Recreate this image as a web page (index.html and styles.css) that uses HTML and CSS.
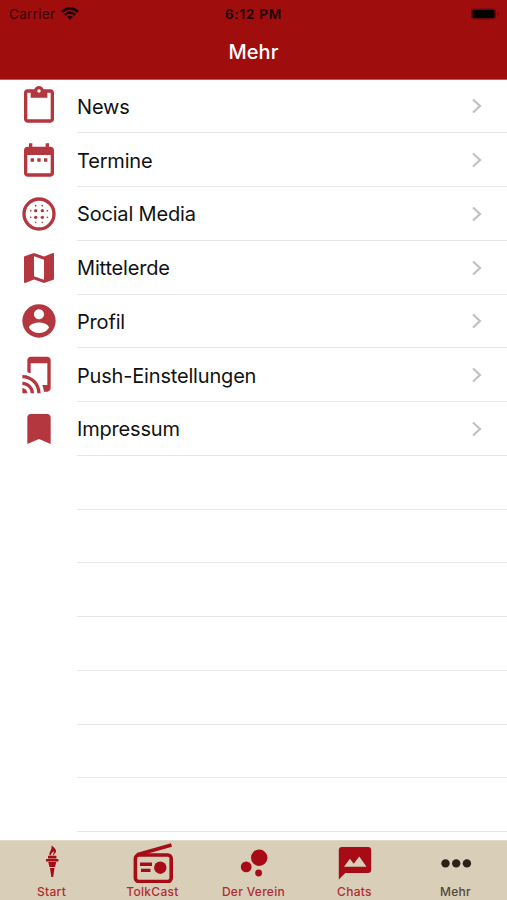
FILE: index.html
```html
<!DOCTYPE html>
<html lang="de">
<head>
<meta charset="utf-8">
<title>Mehr</title>
<link rel="stylesheet" href="styles.css">
</head>
<body>
<div class="app">
  <header class="header">
    <div class="status">
      <div class="carrier"><span>Carrier</span>
        <svg class="wifi" viewBox="0 0 18 13"><path d="M1 4.9Q9-2.2 17 4.900M3.800 7.800q5.200-4.500 10.400 0" fill="none" stroke="currentColor" stroke-width="2.500"/><path d="M9 12.700 6.100 9.800q2.900-2.300 5.800 0z"/></svg>
      </div>
      <span class="time">6:12 PM</span>
      <svg class="battery" viewBox="0 0 30 14"><rect x="1" y="1.500" width="25" height="11" rx="3.200" fill="#6c080a"/><rect x="2.500" y="3" width="22" height="8" rx="1.800"/><path d="M27.300 5v4q1.400-.6 1.400-2t-1.400-2" fill="#6c080a"/></svg>
    </div>
    <h1 class="title">Mehr</h1>
  </header>
  <main class="list">
    <a class="row"><svg class="icon" viewBox="0 0 24 24"><path d="M19 2h-4.180C14.400.84 13.300 0 12 0S9.600.84 9.180 2H5c-1.100 0-2 .9-2 2v16c0 1.100.9 2 2 2h14c1.100 0 2-.9 2-2V4c0-1.100-.9-2-2-2zm-7 0c.55 0 1 .45 1 1s-.45 1-1 1-1-.45-1-1 .45-1 1-1zm7 18H5V4h2v3h10V4h2v16z"/></svg><span class="cell"><span class="name">News</span><svg class="chevron" viewBox="0 0 12 16"><path d="m2 1.500 7 6.500-7 6.500"/></svg></span></a>
    <a class="row"><svg class="icon" viewBox="0 0 24 24"><path d="M9 11H7v2h2v-2zm4 0h-2v2h2v-2zm4 0h-2v2h2v-2zm2-7h-1V2h-2v2H8V2H6v2H5c-1.100 0-2 .9-2 2v14c0 1.100.9 2 2 2h14c1.100 0 2-.9 2-2V6c0-1.100-.9-2-2-2zm0 16H5V9h14v11z"/></svg><span class="cell"><span class="name">Termine</span><svg class="chevron" viewBox="0 0 12 16"><path d="m2 1.500 7 6.500-7 6.500"/></svg></span></a>
    <a class="row"><svg class="icon" viewBox="0 0 24 24"><circle cx="12" cy="12" r="9" fill="none" stroke="currentColor" stroke-width="2"/><g><circle cx="10" cy="10" r="1"/><circle cx="14" cy="10" r="1"/><circle cx="10" cy="14" r="1"/><circle cx="14" cy="14" r="1"/><circle cx="10" cy="7" r=".5"/><circle cx="14" cy="7" r=".5"/><circle cx="10" cy="17" r=".5"/><circle cx="14" cy="17" r=".5"/><circle cx="7" cy="10" r=".5"/><circle cx="7" cy="14" r=".5"/><circle cx="17" cy="10" r=".5"/><circle cx="17" cy="14" r=".5"/></g></svg><span class="cell"><span class="name">Social Media</span><svg class="chevron" viewBox="0 0 12 16"><path d="m2 1.500 7 6.500-7 6.500"/></svg></span></a>
    <a class="row"><svg class="icon" viewBox="0 0 24 24"><path d="M20.500 3l-.16.03L15 5.100 9 3 3.360 4.900c-.21.07-.36.25-.36.48V20.500c0 .28.22.5.5.5l.16-.03L9 18.900l6 2.100 5.640-1.900c.21-.07.36-.25.36-.48V3.500c0-.28-.22-.5-.5-.5zM15 19l-6-2.110V5l6 2.110V19z"/></svg><span class="cell"><span class="name">Mittelerde</span><svg class="chevron" viewBox="0 0 12 16"><path d="m2 1.500 7 6.500-7 6.500"/></svg></span></a>
    <a class="row"><svg class="icon" viewBox="0 0 24 24"><path d="M12 2C6.480 2 2 6.480 2 12s4.480 10 10 10 10-4.480 10-10S17.520 2 12 2zm0 3c1.660 0 3 1.340 3 3s-1.340 3-3 3-3-1.340-3-3 1.340-3 3-3zm0 14.200c-2.500 0-4.710-1.280-6-3.220.03-1.990 4-3.080 6-3.080 1.990 0 5.970 1.090 6 3.080-1.290 1.940-3.500 3.220-6 3.220z"/></svg><span class="cell"><span class="name">Profil</span><svg class="chevron" viewBox="0 0 12 16"><path d="m2 1.500 7 6.500-7 6.500"/></svg></span></a>
    <a class="row"><svg class="icon" viewBox="0 0 24 24"><path d="M2 16v2c2.760 0 5 2.240 5 5h2c0-3.870-3.130-7-7-7zm0 4v3h3c0-1.660-1.340-3-3-3zm0-8v2c4.970 0 9 4.030 9 9h2c0-6.080-4.930-11-11-11zM17 1H7c-1.100 0-2 .9-2 2v7.370c.69.16 1.360.37 2 .64V5h10v13h-3.030c.52 1.250.84 2.590.95 4H17c1.100 0 2-.9 2-2V3c0-1.100-.9-2-2-2z"/></svg><span class="cell"><span class="name">Push-Einstellungen</span><svg class="chevron" viewBox="0 0 12 16"><path d="m2 1.500 7 6.500-7 6.500"/></svg></span></a>
    <a class="row"><svg class="icon" viewBox="0 0 24 24"><path d="M17 3H7c-1.100 0-2 .9-2 2v16l7-3 7 3V5c0-1.100-.9-2-2-2z"/></svg><span class="cell"><span class="name">Impressum</span><svg class="chevron" viewBox="0 0 12 16"><path d="m2 1.500 7 6.500-7 6.500"/></svg></span></a>
    <div class="row"><span class="cell"></span></div>
    <div class="row"><span class="cell"></span></div>
    <div class="row"><span class="cell"></span></div>
    <div class="row"><span class="cell"></span></div>
    <div class="row"><span class="cell"></span></div>
    <div class="row"><span class="cell"></span></div>
    <div class="row"><span class="cell"></span></div>
  </main>
  <nav class="tabs">
    <a class="tab"><svg class="glyph" viewBox="0 0 42 42"><path d="M20.500 4.500c4.200 3 5 4.900 4.300 6.700-.5 1.200-1.700 1.900-2.300 3h-.9c.8-1.500 1.700-2.900.8-4.300-.4 1.800-2.800 2.300-2.200 4.300h-1.400c-1.600-3 2.500-4.500 1.700-9.700zM17 14.800h8.400v2.600H17zM15 18h12.400v2.400H15zM17.300 21h7.900l-1.100 5h-5.700zM19 27h4.500l-1.300 9h-1.900z"/></svg><span>Start</span></a>
    <a class="tab"><svg class="glyph" viewBox="0 0 42 42"><g fill="none" stroke="currentColor" stroke-width="3.600"><rect x="3.400" y="14" width="35.800" height="26.500" rx="3.400"/><path d="M5 13.800 39.500 3.900"/></g><path d="M8 21.600h12V25H8zM9 27.800h9.500v3.300H9z"/><circle cx="28.300" cy="26.700" r="6.200"/></svg><span>TolkCast</span></a>
    <a class="tab"><svg class="glyph" viewBox="0 0 42 42"><circle cx="26.200" cy="16.700" r="8.200"/><circle cx="13.200" cy="25.900" r="5.400"/><circle cx="25.600" cy="32" r="3.400"/></svg><span>Der Verein</span></a>
    <a class="tab"><svg class="glyph" viewBox="0 0 42 42"><path fill-rule="evenodd" d="M8 6h26a3.200 3.200 0 0 1 3.200 3.200v19.600A3.200 3.200 0 0 1 34 32H11.300l-6.500 6.500V9.200A3.200 3.200 0 0 1 8 6zM10 25.700h22.500L25.300 15.500l-5.600 7.200-3.800-5z"/></svg><span>Chats</span></a>
    <a class="tab active"><svg class="glyph" viewBox="0 0 42 42"><circle cx="10.500" cy="22.400" r="4.200"/><circle cx="21.200" cy="22.400" r="4.200"/><circle cx="31.900" cy="22.400" r="4.200"/></svg><span>Mehr</span></a>
  </nav>
</div>
</body>
</html>
```
FILE: styles.css
```css
* { box-sizing: border-box; }
body {
  margin: 0;
  background: #fff;
  font-family: Inter, "Liberation Sans", sans-serif;
}
.app {
  display: flex;
  flex-direction: column;
  height: 900px;
  overflow: hidden;
}
.header {
  flex: none;
  height: 79.5px;
  background: #9f0d0d;
  border-bottom: 1px solid #c85658;
}
.status {
  display: grid;
  grid-template-columns: 1fr auto 1fr;
  align-items: center;
  height: 27px;
  padding: 0 7px 0 9px;
  color: #180303;
  font-size: 13.5px;
}
.carrier { display: flex; align-items: center; gap: 6px; color: #350506; letter-spacing: 0.3px; }
.wifi { width: 18px; height: 13px; fill: currentColor; color: #180303; }
.time { margin-right: 2px; font-weight: 600; letter-spacing: 0.8px; }
.battery { width: 30px; height: 14px; justify-self: end; }
.title {
  margin: 0;
  color: #fff;
  font-size: 20px;
  font-weight: 500;
  line-height: 51px;
  letter-spacing: 0;
  text-align: center;
}
.list { flex: 1; min-height: 0; overflow: hidden; }
.row { display: flex; justify-content: flex-end; align-items: center; height: 53.75px; }
.icon { flex: none; width: 40px; height: 40px; margin-right: 18px; fill: currentColor; color: #b4363f; }
.cell {
  flex: none;
  display: flex;
  align-items: center;
  justify-content: space-between;
  width: 430px;
  height: 100%;
  padding: 1px 24px 0 0;
  border-bottom: 1px solid #e6e6e6;
}
.name { padding-top: 1px; color: #111; font-size: 20px; letter-spacing: -0.18px; }
.chevron { width: 12px; height: 16px; fill: none; stroke: #c0c0c2; stroke-width: 2.2; }
.tabs {
  flex: none;
  display: grid;
  grid-template-columns: repeat(5, 101px);
  justify-content: center;
  height: 60px;
  background: #d9ceb7;
  border-top: 1px solid #e0d8c6;
}
.tab {
  display: flex;
  flex-direction: column;
  align-items: center;
  color: #b02c33;
  font-size: 12px;
  font-weight: 500;
  line-height: 17px;
  letter-spacing: 0.3px;
}
.glyph { width: 42px; height: 42px; fill: currentColor; color: #a60b16; }
.active { color: #51473c; }
.active .glyph { color: #2c2017; }
```
